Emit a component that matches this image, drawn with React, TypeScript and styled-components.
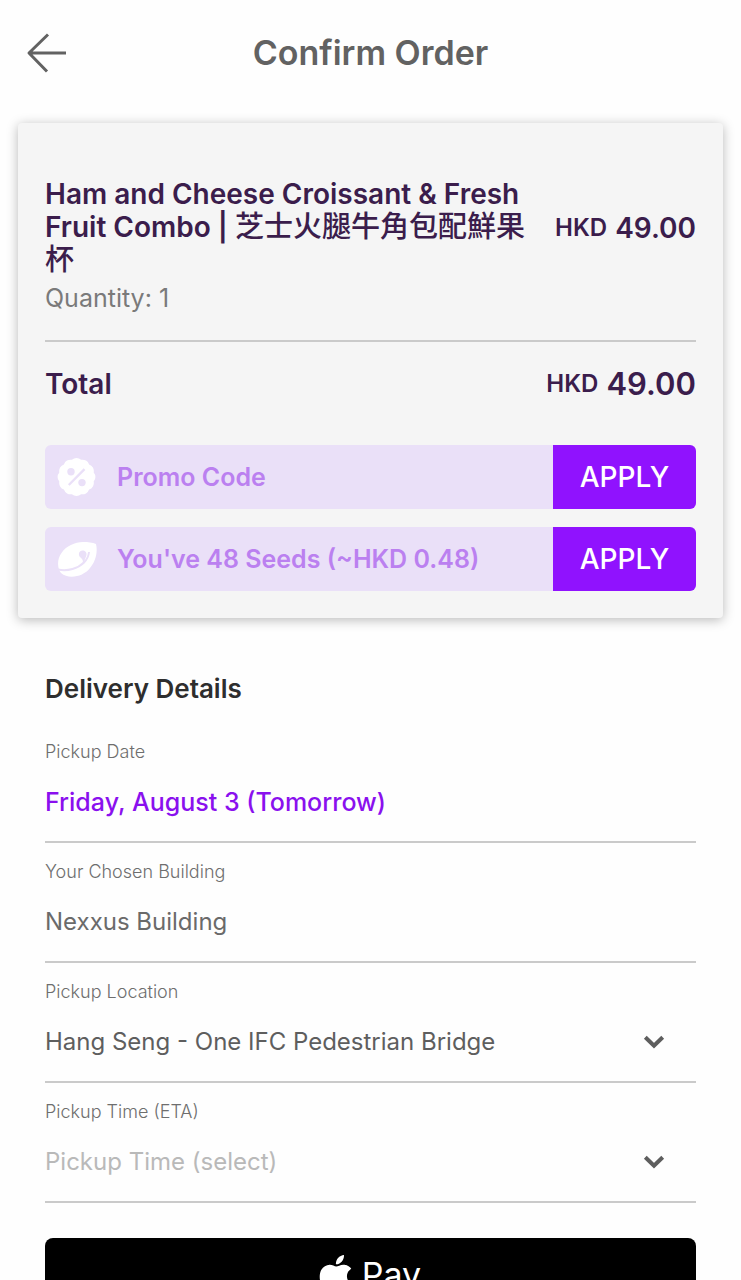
import React from "react";
import styled, { createGlobalStyle } from "styled-components";
import { SiApple } from "react-icons/si";

const GlobalStyle = createGlobalStyle`
  * { box-sizing: border-box; }
  body {
    margin: 0;
    background: #fefefe;
    color: #626262;
    font-family: Inter, "Noto Sans CJK TC", sans-serif;
    font-size: 24px;
    line-height: 32px;
  }
  button, input, select { font: inherit; color: inherit; border: 0; margin: 0; padding: 0; }
  h1, h2, p { margin: 0; }
`;

const Screen = styled.div`
  height: 100vh;
  overflow-y: auto;
  scrollbar-width: none;
  padding: 0 18px 24px;
`;

const Header = styled.header`
  display: grid;
  grid-template-columns: 60px 1fr 60px;
  align-items: center;
  height: 105px;
  margin-bottom: 18px;
`;

const BackButton = styled.button`
  display: flex;
  justify-self: start;
  padding-left: 8px;
  background: none;
`;

const PageTitle = styled.h1`
  text-align: center;
  font-size: 34px;
  line-height: 40px;
  font-weight: 600;
`;

const Card = styled.section`
  display: flex;
  flex-direction: column;
  padding: 55px 27px 27px;
  border-radius: 4px;
  background: #f5f5f5;
  box-shadow: 0 2px 12px rgba(0, 0, 0, 0.28);
  color: #3b1d4c;
`;

const Item = styled.div`
  display: flex;
  align-items: center;
  justify-content: space-between;
  gap: 16px;
`;

const ItemName = styled.h2`
  flex: 1;
  font-size: 28px;
  line-height: 33px;
  font-weight: 600;
`;

const LocalName = styled.span`
  font-family: "Noto Sans CJK TC", sans-serif;
  font-size: 29px;
  line-height: 24px;
  font-weight: 500;
`;

const Price = styled.span<{ $large?: boolean }>`
  display: flex;
  align-items: center;
  gap: 8px;
  white-space: nowrap;
  font-size: ${(p) => (p.$large ? 31 : 28)}px;
  font-weight: 600;
`;

const Currency = styled.span`
  font-size: 24px;
`;

const Quantity = styled.p`
  padding: 5px 0 26px;
  border-bottom: 2px solid #cacaca;
  color: #7a7a7a;
  font-size: 25px;
`;

const TotalRow = styled.div`
  display: flex;
  align-items: center;
  justify-content: space-between;
  height: 84px;
  font-size: 28px;
  font-weight: 600;
`;

const Offers = styled.div`
  display: flex;
  flex-direction: column;
  gap: 18px;
  padding-top: 19px;
`;

const Offer = styled.form`
  display: flex;
  align-items: center;
  gap: 20px;
  height: 64px;
  padding-left: 11px;
  border-radius: 6px;
  overflow: hidden;
  background: #eae0f8;
  color: #bb80f0;
  font-size: 25px;
  font-weight: 600;
`;

const OfferInput = styled.input`
  flex: 1;
  min-width: 0;
  background: none;
  outline: none;
  &::placeholder { color: inherit; opacity: 1; }
`;

const OfferText = styled.span`
  flex: 1;
`;

const ApplyButton = styled.button`
  width: 143px;
  height: 100%;
  background: #9012fe;
  color: #fff;
  font-size: 28px;
  font-weight: 500;
`;

const Delivery = styled.section`
  padding: 54px 27px 0;
`;

const SectionTitle = styled.h2`
  padding-bottom: 17px;
  color: #2e2e2e;
  font-size: 26px;
  line-height: 34px;
  font-weight: 600;
`;

const Field = styled.div`
  display: flex;
  flex-direction: column;
  gap: 22px;
  padding: 17px 0 23px;
  border-bottom: 2px solid #cacaca;
`;

const FieldLabel = styled.label`
  color: #6e6e6e;
  font-size: 18px;
  line-height: 24px;
  font-weight: 300;
`;

const FieldValue = styled.output<{ $accent?: boolean }>`
  color: ${(p) => (p.$accent ? "#8a10ee" : "#6a6a6a")};
  font-size: ${(p) => (p.$accent ? 25 : 24)}px;
  font-weight: ${(p) => (p.$accent ? 500 : 400)};
`;

const SelectBox = styled.div`
  display: grid;
  align-items: center;
  & > * { grid-area: 1 / 1; }
  & > svg { justify-self: end; margin-right: 31px; pointer-events: none; }
`;

const Select = styled.select<{ $empty?: boolean }>`
  appearance: none;
  width: 100%;
  height: 32px;
  background: none;
  outline: none;
  color: ${(p) => (p.$empty ? "#b9b9b9" : "#5e5e5e")};
`;

const PayButton = styled.button`
  display: flex;
  align-items: center;
  justify-content: center;
  gap: 6px;
  width: 100%;
  height: 74px;
  margin-top: 35px;
  padding-right: 4px;
  border-radius: 8px;
  background: #000;
  color: #fff;
  font-size: 34px;
`;

const BackArrow = () => (
  <svg width="42" height="42" viewBox="0 0 42 42" fill="none" stroke="#626262" strokeWidth="3">
    <path d="M22 2.500 L3 21 L21 39.500 M3 21 H40" strokeLinejoin="round" />
  </svg>
);

const scallops = Array.from({ length: 13 }, (_, i) => {
  const angle = ((15 + 30 * i) * Math.PI) / 180;
  const x = (20 + 17.8 * Math.cos(angle)).toFixed(2);
  const y = (20 + 17.8 * Math.sin(angle)).toFixed(2);
  return i === 0 ? `M${x} ${y}` : `A7 7 0 0 1 ${x} ${y}`;
}).join(" ");

const PromoIcon = () => (
  <svg width="41" height="40" viewBox="0 0 40 40">
    <path d={scallops} fill="#fff" />
    <g fill="#eae0f8">
      <circle cx="14.500" cy="14.800" r="3.700" />
      <circle cx="25.500" cy="25.600" r="3.700" />
    </g>
    <path d="M12.300 28 L28 12.200" stroke="#eae0f8" strokeWidth="2.400" />
  </svg>
);

const SeedIcon = () => (
  <svg width="41" height="40" viewBox="0 0 41 40">
    <path
      d="M40 5 C42 13 39.500 23 34 29 C27.500 37.500 13 41 5 34 C1.500 30 0.500 21 5.500 14 C10 7 19 3 27 3 C32 3 36.500 3.500 40 5 Z"
      fill="#fff"
    />
    <path
      d="M26.500 11.500 C29 11.500 31 13.500 30.500 16 C30 18.500 28.500 19.500 28.500 23 L26.500 24.500 C27.500 21.500 26.500 20 24.500 18.500 C21.500 16 23 11.500 26.500 11.500 Z"
      fill="#eae0f8"
    />
    <path
      d="M2 30.500 C12 32.500 22 29.500 28 23.500 C31 20.500 32.500 18 33 13"
      fill="none" stroke="#eae0f8" strokeWidth="2"
    />
  </svg>
);

const Chevron = () => (
  <svg width="22" height="16" viewBox="0 0 22 16" fill="none" stroke="#5e5e5e" strokeWidth="4">
    <path d="M2.300 3.200 L11 11.700 L19.700 3.200" />
  </svg>
);

export default function App() {
  return (
    <>
      <GlobalStyle />
      <Screen>
        <Header>
          <BackButton type="button" aria-label="Back">
            <BackArrow />
          </BackButton>
          <PageTitle>Confirm Order</PageTitle>
        </Header>

        <Card>
          <Item>
            <ItemName>
              Ham and Cheese Croissant &amp; Fresh Fruit Combo |{" "}
              <LocalName lang="zh-Hant">芝士火腿牛角包配鮮果杯</LocalName>
            </ItemName>
            <Price>
              <Currency>HKD</Currency>
              <span>49.00</span>
            </Price>
          </Item>
          <Quantity>Quantity: 1</Quantity>
          <TotalRow>
            <span>Total</span>
            <Price $large>
              <Currency>HKD</Currency>
              <span>49.00</span>
            </Price>
          </TotalRow>
          <Offers>
            <Offer onSubmit={(e) => e.preventDefault()}>
              <PromoIcon />
              <OfferInput type="text" placeholder="Promo Code" aria-label="Promo Code" />
              <ApplyButton type="submit">APPLY</ApplyButton>
            </Offer>
            <Offer onSubmit={(e) => e.preventDefault()}>
              <SeedIcon />
              <OfferText>You've 48 Seeds (~HKD 0.48)</OfferText>
              <ApplyButton type="submit">APPLY</ApplyButton>
            </Offer>
          </Offers>
        </Card>

        <Delivery>
          <SectionTitle>Delivery Details</SectionTitle>
          <Field>
            <FieldLabel htmlFor="date">Pickup Date</FieldLabel>
            <FieldValue id="date" $accent>Friday, August 3 (Tomorrow)</FieldValue>
          </Field>
          <Field>
            <FieldLabel htmlFor="building">Your Chosen Building</FieldLabel>
            <FieldValue id="building">Nexxus Building</FieldValue>
          </Field>
          <Field>
            <FieldLabel htmlFor="location">Pickup Location</FieldLabel>
            <SelectBox>
              <Select id="location">
                <option>Hang Seng - One IFC Pedestrian Bridge</option>
              </Select>
              <Chevron />
            </SelectBox>
          </Field>
          <Field>
            <FieldLabel htmlFor="time">Pickup Time (ETA)</FieldLabel>
            <SelectBox>
              <Select id="time" $empty>
                <option>Pickup Time (select)</option>
              </Select>
              <Chevron />
            </SelectBox>
          </Field>
          <PayButton type="button">
            <SiApple size={40} aria-label="Apple" />
            <span>Pay</span>
          </PayButton>
        </Delivery>
      </Screen>
    </>
  );
}
